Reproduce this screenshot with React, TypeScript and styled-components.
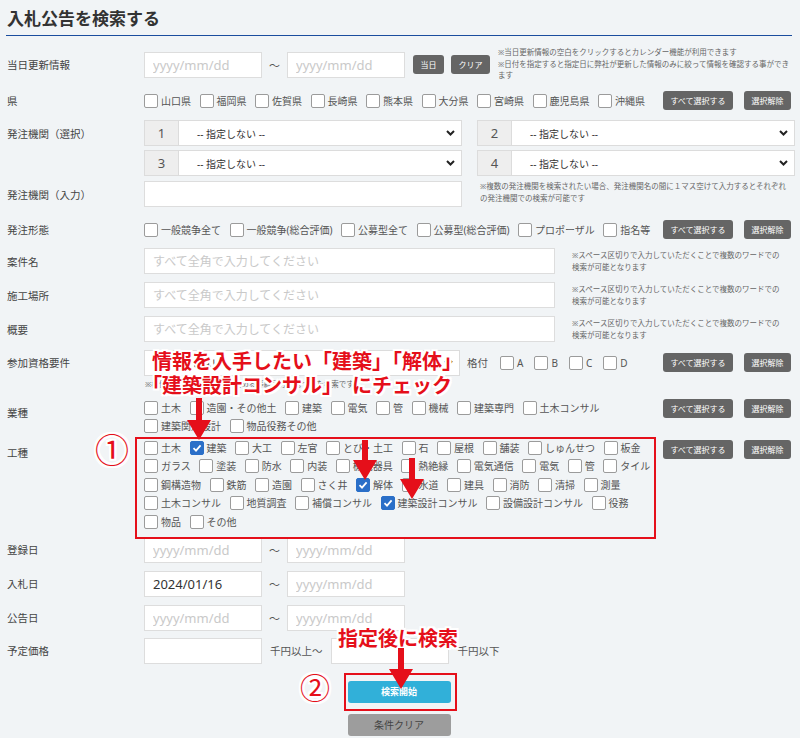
import React from 'react';
import styled, { createGlobalStyle } from 'styled-components';

const RED = '#e50f1a';

const GlobalStyle = createGlobalStyle`
  * { box-sizing: border-box; }
  html, body { margin: 0; padding: 0; background: #f1f4f6; }
  body {
    font-family: "Noto Sans", "Noto Sans CJK JP", sans-serif;
    color: #444;
  }
`;

const Page = styled.div`
  position: relative;
  width: 800px;
  height: 738px;
  overflow: hidden;
  padding: 0 4px 0 6px;
`;

const Title = styled.h1`
  width: 786px;
  margin: 0;
  padding: 7px 0 4px 1px;
  font-size: 17px;
  line-height: 24px;
  font-weight: 700;
  color: #333;
  border-bottom: 1px solid #1b4d9e;
`;

const Row = styled.div<{ $mt: number; $center?: boolean }>`
  display: flex;
  align-items: ${p => (p.$center ? 'center' : 'flex-start')};
  margin-top: ${p => p.$mt}px;
`;

const Label = styled.div<{ $h?: number }>`
  flex: 0 0 138px;
  height: ${p => (p.$h ? `${p.$h}px` : 'auto')};
  display: flex;
  align-items: center;
  padding-left: 1px;
  font-size: 10.5px;
  color: #444;
  white-space: nowrap;
`;

const Content = styled.div<{ $column?: boolean; $center?: boolean }>`
  flex: 1;
  min-width: 0;
  display: flex;
  flex-direction: ${p => (p.$column ? 'column' : 'row')};
  align-items: ${p => (p.$center ? 'center' : 'flex-start')};
`;

const Line = styled.div<{ $h: number }>`
  display: flex;
  align-items: center;
  align-self: stretch;
  height: ${p => p.$h}px;
`;

const Field = styled.input<{ $w: number; $h?: number; $jp?: boolean }>`
  flex-shrink: 0;
  width: ${p => p.$w}px;
  height: ${p => p.$h ?? 26}px;
  margin: 0;
  padding: 0 8px;
  border: 1px solid #dddddd;
  border-radius: 0;
  background: #fff;
  outline: none;
  font-family: "Noto Sans", "Noto Sans CJK JP", sans-serif;
  font-size: ${p => (p.$jp ? 12 : 13)}px;
  color: #333;

  &::placeholder {
    color: #c9c9c9;
  }
`;

const Tilde = styled.span`
  margin: 0 7px;
  font-size: 11px;
  color: #555;
`;

const Unit = styled.span<{ $ml: number; $mr?: number }>`
  margin-left: ${p => p.$ml}px;
  margin-right: ${p => p.$mr ?? 0}px;
  font-size: 10.5px;
  color: #555;
  white-space: nowrap;
  align-self: center;
`;

const GrayButton = styled.button`
  height: 19px;
  padding: 0 7.5px;
  border: none;
  border-radius: 3px;
  background: #656565;
  color: #fff;
  font-family: inherit;
  font-size: 8px;
  line-height: 19px;
  white-space: nowrap;
`;

const ButtonPair = styled.div<{ $ml?: number; $gap?: number }>`
  display: flex;
  flex-shrink: 0;
  gap: ${p => p.$gap ?? 11}px;
  margin-left: ${p => (p.$ml !== undefined ? `${p.$ml}px` : 'auto')};
  margin-right: ${p => (p.$ml !== undefined ? 0 : 5)}px;
`;

const Note = styled.div<{ $w: number; $ml: number; $mt?: number }>`
  flex-shrink: 0;
  width: ${p => p.$w}px;
  margin-left: ${p => p.$ml}px;
  margin-top: ${p => p.$mt ?? 0}px;
  font-size: 7.5px;
  line-height: 11.7px;
  color: #666;
`;

const SelectGroup = styled.div<{ $w: number }>`
  display: flex;
  width: ${p => p.$w}px;
  height: 26px;
  border: 1px solid #dcdcdc;
  background: #fff;
`;

const SelectNum = styled.div`
  width: 34px;
  background: #eeeeee;
  border-right: 1px solid #dcdcdc;
  display: flex;
  align-items: center;
  justify-content: center;
  font-size: 13px;
  color: #555;
`;

const SelectValue = styled.div`
  flex: 1;
  display: flex;
  align-items: center;
  justify-content: space-between;
  padding: 0 6px 0 18px;
  font-size: 10px;
  color: #333;
  white-space: nowrap;
`;

const SelectGrid = styled.div`
  display: grid;
  grid-template-columns: 318px 318px;
  column-gap: 15px;
  row-gap: 4px;
`;

const CheckGroup = styled.div<{ $w?: number; $pt?: number; $gap?: number; $fit?: boolean }>`
  display: flex;
  flex-wrap: wrap;
  flex: ${p => (p.$w ? `0 0 ${p.$w}px` : p.$fit ? '0 0 auto' : '1')};
  column-gap: ${p => p.$gap ?? 8.5}px;
  row-gap: 4.5px;
  padding-top: ${p => p.$pt ?? 0}px;
`;

const CheckItem = styled.label`
  display: inline-flex;
  align-items: center;
  gap: 3px;
  height: 14px;
  font-size: 10px;
  line-height: 14px;
  color: #555;
  white-space: nowrap;
`;

const Box = styled.span<{ $checked?: boolean }>`
  width: 14px;
  height: 14px;
  flex-shrink: 0;
  display: flex;
  align-items: center;
  justify-content: center;
  border: 1px solid ${p => (p.$checked ? '#2a6fc8' : '#9b9b9b')};
  border-radius: 2px;
  background: ${p => (p.$checked ? '#2a6fc8' : '#fff')};
`;

const Actions = styled.div`
  display: flex;
  flex-direction: column;
  align-items: center;
  gap: 11px;
  margin-top: 17px;
  padding-right: 4px;
`;

const SearchButton = styled.button`
  width: 103px;
  height: 22px;
  border: none;
  border-radius: 3px;
  background: #31b0d9;
  color: #fff;
  font-family: inherit;
  font-size: 9px;
  font-weight: 700;
`;

const ClearButton = styled.button`
  width: 103px;
  height: 22px;
  border: none;
  border-radius: 3px;
  background: #9d9d9d;
  color: #444;
  font-family: inherit;
  font-size: 10px;
`;

/* annotation layer */
const halo = `
  0 0 3px #fff, 2px 0 0 #fff, -2px 0 0 #fff, 0 2px 0 #fff, 0 -2px 0 #fff,
  2px 2px 0 #fff, -2px -2px 0 #fff, 2px -2px 0 #fff, -2px 2px 0 #fff
`;

const RedFrame = styled.div<{ $x: number; $y: number; $w: number; $h: number }>`
  position: absolute;
  left: ${p => p.$x}px;
  top: ${p => p.$y}px;
  width: ${p => p.$w}px;
  height: ${p => p.$h}px;
  border: 2px solid ${RED};
  pointer-events: none;
`;

const Callout = styled.div<{ $x: number; $y: number }>`
  position: absolute;
  left: ${p => p.$x}px;
  top: ${p => p.$y}px;
  font-family: "Noto Sans CJK JP", sans-serif;
  font-size: 20px;
  line-height: 24px;
  font-weight: 700;
  color: ${RED};
  white-space: nowrap;
  text-shadow: ${halo};
`;

const CalloutLine = styled.div<{ $shift?: number }>`
  margin-left: ${p => p.$shift ?? 0}px;
`;

const CalloutGap = styled.span`
  display: inline-block;
  width: 10px;
`;

const CircleNum = styled.div<{ $x: number; $y: number; $size: number }>`
  position: absolute;
  left: ${p => p.$x}px;
  top: ${p => p.$y}px;
  font-family: "Noto Sans CJK JP", sans-serif;
  font-size: ${p => p.$size}px;
  line-height: 1;
  color: ${RED};
  text-shadow: ${halo};
`;

const ArrowSvg = styled.svg<{ $x: number; $y: number }>`
  position: absolute;
  left: ${p => p.$x}px;
  top: ${p => p.$y}px;
  overflow: visible;
`;

const Arrow = ({ x, y, h }: { x: number; y: number; h: number }) => {
  const head = 20;
  return (
    <ArrowSvg $x={x} $y={y} width={24} height={h} viewBox={`0 0 24 ${h}`}>
      <polygon
        points={`9,0 15,0 15,${h - head} 24,${h - head} 12,${h} 0,${h - head} 9,${h - head}`}
        fill={RED}
      />
    </ArrowSvg>
  );
};

const Chevron = () => (
  <svg width="9" height="6" viewBox="0 0 9 6">
    <polyline points="1,1 4.5,4.5 8,1" fill="none" stroke="#222" strokeWidth="2" />
  </svg>
);

const CheckMark = () => (
  <svg width="10" height="10" viewBox="0 0 10 10">
    <polyline points="1.5,5.2 4,7.6 8.6,2.4" fill="none" stroke="#fff" strokeWidth="1.8" />
  </svg>
);

const Check = ({ label, checked }: { label: string; checked?: boolean }) => (
  <CheckItem>
    <Box $checked={checked}>{checked && <CheckMark />}</Box>
    {label}
  </CheckItem>
);

const Select = ({ num, w }: { num?: number; w: number }) => (
  <SelectGroup $w={w}>
    {num !== undefined && <SelectNum>{num}</SelectNum>}
    <SelectValue>
      -- 指定しない --
      <Chevron />
    </SelectValue>
  </SelectGroup>
);

const SelectAll = () => (
  <ButtonPair>
    <GrayButton>すべて選択する</GrayButton>
    <GrayButton>選択解除</GrayButton>
  </ButtonPair>
);

const DateRange = ({ from }: { from?: string }) => (
  <>
    <Field $w={118} placeholder="yyyy/mm/dd" value={from} readOnly />
    <Tilde>〜</Tilde>
    <Field $w={118} placeholder="yyyy/mm/dd" />
  </>
);

const prefs = ['山口県', '福岡県', '佐賀県', '長崎県', '熊本県', '大分県', '宮崎県', '鹿児島県', '沖縄県'];
const keitai = ['一般競争全て', '一般競争(総合評価)', '公募型全て', '公募型(総合評価)', 'プロポーザル', '指名等'];
const gyoshu = ['土木', '造園・その他土', '建築', '電気', '管', '機械', '建築専門', '土木コンサル', '建築関連設計', '物品役務その他'];
const koshu = [
  '土木', '建築', '大工', '左官', 'とび・土工', '石', '屋根', '舗装', 'しゅんせつ', '板金',
  'ガラス', '塗装', '防水', '内装', '機械器具', '熱絶縁', '電気通信', '電気', '管', 'タイル',
  '鋼構造物', '鉄筋', '造園', 'さく井', '解体', '水道', '建具', '消防', '清掃', '測量',
  '土木コンサル', '地質調査', '補償コンサル', '建築設計コンサル', '設備設計コンサル', '役務',
  '物品', 'その他',
];
const checkedKoshu = ['建築', '解体', '建築設計コンサル'];
const WORD_NOTE = '※スペース区切りで入力していただくことで複数のワードでの検索が可能となります';
const JP_PLACEHOLDER = 'すべて全角で入力してください';

export default function App() {
  return (
    <Page>
      <GlobalStyle />
      <Title>入札公告を検索する</Title>

      <Row $mt={11} $center>
        <Label>当日更新情報</Label>
        <Content $center>
          <DateRange />
          <ButtonPair $ml={8} $gap={7}>
            <GrayButton>当日</GrayButton>
            <GrayButton>クリア</GrayButton>
          </ButtonPair>
          <Note $w={296} $ml={8}>
            ※当日更新情報の空白をクリックするとカレンダー機能が利用できます
            <br />
            ※日付を指定すると指定日に弊社が更新した情報のみに絞って情報を確認する事ができます
          </Note>
        </Content>
      </Row>

      <Row $mt={9}>
        <Label $h={19}>県</Label>
        <Content>
          <CheckGroup $pt={2.5}>
            {prefs.map(p => <Check key={p} label={p} />)}
          </CheckGroup>
          <SelectAll />
        </Content>
      </Row>

      <Row $mt={10}>
        <Label $h={26}>発注機関（選択）</Label>
        <Content>
          <SelectGrid>
            {[1, 2, 3, 4].map(n => <Select key={n} num={n} w={318} />)}
          </SelectGrid>
        </Content>
      </Row>

      <Row $mt={5}>
        <Label $h={26}>発注機関（入力）</Label>
        <Content>
          <Field $w={318} />
          <Note $w={310} $ml={18}>
            ※複数の発注機関を検索されたい場合、発注機関名の間に１マス空けて入力するとそれぞれの発注機関での検索が可能です
          </Note>
        </Content>
      </Row>

      <Row $mt={13}>
        <Label $h={19}>発注形態</Label>
        <Content $center>
          <CheckGroup>
            {keitai.map(k => <Check key={k} label={k} />)}
          </CheckGroup>
          <SelectAll />
        </Content>
      </Row>

      {['案件名', '施工場所', '概要'].map((name, i) => (
        <Row key={name} $mt={i === 0 ? 9 : 8}>
          <Label $h={26}>{name}</Label>
          <Content>
            <Field $w={411} $jp placeholder={JP_PLACEHOLDER} />
            <Note $w={212} $ml={17} $mt={2}>{WORD_NOTE}</Note>
          </Content>
        </Row>
      ))}

      <Row $mt={8}>
        <Label $h={25}>参加資格要件</Label>
        <Content $column>
          <Line $h={25}>
            <Select w={316} />
            <Unit $ml={7} $mr={12}>格付</Unit>
            <CheckGroup $gap={11} $fit>
              {['A', 'B', 'C', 'D'].map(g => <Check key={g} label={g} />)}
            </CheckGroup>
            <SelectAll />
          </Line>
          <Note $w={400} $ml={1} $mt={4}>※格付の指定は発注機関の定める等級区分に基づいた検索です</Note>
        </Content>
      </Row>

      <Row $mt={8}>
        <Label $h={28}>業種</Label>
        <Content>
          <CheckGroup $w={514} $pt={2}>
            {gyoshu.map(g => <Check key={g} label={g} />)}
          </CheckGroup>
          <SelectAll />
        </Content>
      </Row>

      <Row $mt={6.5}>
        <Label $h={26}>工種</Label>
        <Content>
          <CheckGroup $w={514} $pt={1}>
            {koshu.map((k, i) => (
              <Check key={`${k}-${i}`} label={k} checked={checkedKoshu.includes(k)} />
            ))}
          </CheckGroup>
          <SelectAll />
        </Content>
      </Row>

      <Row $mt={8}>
        <Label $h={26}>登録日</Label>
        <Content $center><DateRange /></Content>
      </Row>
      <Row $mt={8}>
        <Label $h={26}>入札日</Label>
        <Content $center><DateRange from="2024/01/16" /></Content>
      </Row>
      <Row $mt={8}>
        <Label $h={26}>公告日</Label>
        <Content $center><DateRange /></Content>
      </Row>

      <Row $mt={7}>
        <Label $h={26}>予定価格</Label>
        <Content $center>
          <Field $w={118} />
          <Unit $ml={8} $mr={8}>千円以上〜</Unit>
          <Field $w={118} />
          <Unit $ml={9}>千円以下</Unit>
        </Content>
      </Row>

      <Actions>
        <SearchButton>検索開始</SearchButton>
        <ClearButton>条件クリア</ClearButton>
      </Actions>

      {/* annotations */}
      <RedFrame $x={135} $y={437} $w={521} $h={102} />
      <RedFrame $x={344} $y={673} $w={113} $h={38} />
      <Callout $x={152} $y={349}>
        <CalloutLine>情報を入手したい「建築」「解体」</CalloutLine>
        <CalloutLine $shift={-10}>
          「建築設計コンサル」<CalloutGap />にチェック
        </CalloutLine>
      </Callout>
      <Callout $x={338} $y={626}>指定後に検索</Callout>
      <CircleNum $x={95} $y={432} $size={34}>①</CircleNum>
      <CircleNum $x={300} $y={671} $size={30}>②</CircleNum>
      <Arrow x={187} y={398} h={42} />
      <Arrow x={353} y={440} h={40} />
      <Arrow x={400} y={458} h={41} />
      <Arrow x={389} y={648} h={41} />
    </Page>
  );
}
